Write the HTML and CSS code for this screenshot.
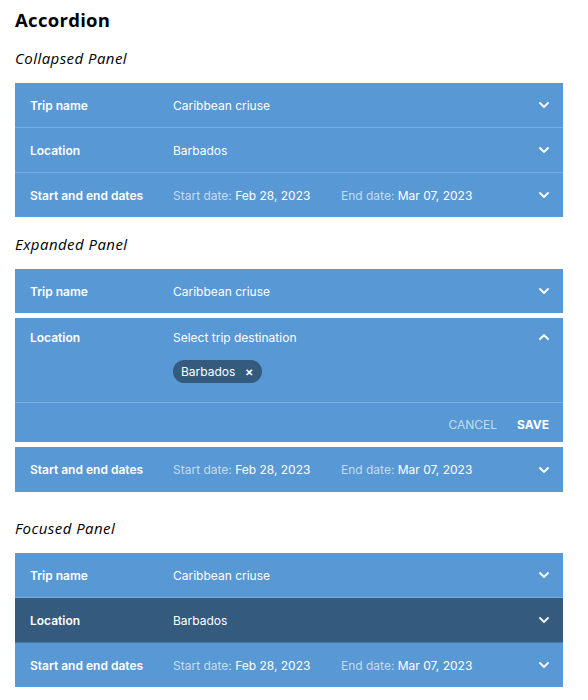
FILE: index.html
```html
<!DOCTYPE html>
<html>
<head>
<meta charset="utf-8">
<link rel="stylesheet" href="styles.css">
</head>
<body>
<h1 class="title">Accordion</h1>

<h2 class="subtitle">Collapsed Panel</h2>
<div class="accordion">
  <div class="row">
    <div class="label">Trip name</div>
    <div class="value">Caribbean criuse</div>
    <svg class="chev" viewBox="0 0 10 6"><path d="M1 1l4 4 4-4"/></svg>
  </div>
  <div class="row">
    <div class="label">Location</div>
    <div class="value">Barbados</div>
    <svg class="chev" viewBox="0 0 10 6"><path d="M1 1l4 4 4-4"/></svg>
  </div>
  <div class="row">
    <div class="label">Start and end dates</div>
    <div class="value dates"><span class="d1"><span class="muted">Start date:</span> Feb 28, 2023</span><span><span class="muted">End date:</span> Mar 07, 2023</span></div>
    <svg class="chev" viewBox="0 0 10 6"><path d="M1 1l4 4 4-4"/></svg>
  </div>
</div>

<h2 class="subtitle">Expanded Panel</h2>
<div class="accordion split">
  <div class="row">
    <div class="label">Trip name</div>
    <div class="value">Caribbean criuse</div>
    <svg class="chev" viewBox="0 0 10 6"><path d="M1 1l4 4 4-4"/></svg>
  </div>
  <div class="panel">
    <div class="row open">
      <div class="label">Location</div>
      <div class="value">Select trip destination</div>
      <svg class="chev" viewBox="0 0 10 6"><path d="M1 5l4-4 4 4"/></svg>
    </div>
    <div class="body">
      <span class="chip">Barbados <span class="x">&#x2715;</span></span>
    </div>
    <div class="actions">
      <span class="cancel">CANCEL</span>
      <span class="save">SAVE</span>
    </div>
  </div>
  <div class="row">
    <div class="label">Start and end dates</div>
    <div class="value dates"><span class="d1"><span class="muted">Start date:</span> Feb 28, 2023</span><span><span class="muted">End date:</span> Mar 07, 2023</span></div>
    <svg class="chev" viewBox="0 0 10 6"><path d="M1 1l4 4 4-4"/></svg>
  </div>
</div>

<h2 class="subtitle focus-title">Focused Panel</h2>
<div class="accordion">
  <div class="row">
    <div class="label">Trip name</div>
    <div class="value">Caribbean criuse</div>
    <svg class="chev" viewBox="0 0 10 6"><path d="M1 1l4 4 4-4"/></svg>
  </div>
  <div class="row focused">
    <div class="label">Location</div>
    <div class="value">Barbados</div>
    <svg class="chev" viewBox="0 0 10 6"><path d="M1 1l4 4 4-4"/></svg>
  </div>
  <div class="row">
    <div class="label">Start and end dates</div>
    <div class="value dates"><span class="d1"><span class="muted">Start date:</span> Feb 28, 2023</span><span><span class="muted">End date:</span> Mar 07, 2023</span></div>
    <svg class="chev" viewBox="0 0 10 6"><path d="M1 1l4 4 4-4"/></svg>
  </div>
</div>
</body>
</html>
```

FILE: styles.css
```css
* { box-sizing: border-box; }
body {
  margin: 0;
  padding: 9px 25px 0 15px;
  background: #fff;
  font-family: Inter, "Noto Sans", sans-serif;
  color: #fff;
}
.title {
  margin: 0;
  font-family: "Open Sans", Lato, sans-serif;
  font-weight: 700;
  font-size: 18.5px;
  line-height: 22px;
  letter-spacing: 0.3px;
  color: #000;
}
.subtitle {
  margin: 16px 0 0;
  font-family: "Open Sans", Lato, sans-serif;
  font-style: italic;
  font-weight: 400;
  font-size: 15px;
  line-height: 22px;
  height: 24px;
  letter-spacing: 0.45px;
  color: #000;
}
.focus-title { margin-top: 25px; }
.accordion {
  margin-top: 12px;
  background: #5898d4;
  display: flex;
  flex-direction: column;
}
.accordion.split {
  background: #fff;
  gap: 5px;
}
.row {
  height: 45px;
  display: flex;
  align-items: center;
  padding: 0 14px 0 15px;
  background: #5898d4;
  font-size: 12px;
}
.accordion > .row:first-child { height: 44px; }
.accordion > .row + .row { border-top: 1px solid #79afe0; }
.row.focused { background: #345a7d; border-top-color: #6f9ed0; }
.row.focused + .row { border-top-color: #4b77a3; }
.label {
  width: 143px;
  font-weight: 600;
  flex: none;
}
.value {
  flex: 1;
  display: flex;
}
.d1 { width: 168px; }
.muted { color: #c4dcf2; }
.chev {
  width: 10px;
  height: 6px;
  fill: none;
  stroke: #fff;
  stroke-width: 1.8;
  stroke-linecap: round;
  stroke-linejoin: round;
}
.panel {
  background: #5898d4;
  display: flex;
  flex-direction: column;
}
.row.open { height: 38px; }
.body {
  padding: 4px 0 19px 158px;
  border-bottom: 1px solid #79afe0;
}
.chip {
  display: inline-flex;
  align-items: center;
  height: 23px;
  padding: 0 9px 0 8px;
  border-radius: 12px;
  background: #345a7d;
  font-size: 12px;
}
.x {
  margin-left: 10px;
  font-size: 10px;
  font-weight: 700;
}
.actions {
  height: 39px;
  display: flex;
  align-items: center;
  justify-content: flex-end;
  gap: 20px;
  padding: 3px 14px 0 0;
  font-size: 12px;
}
.cancel { color: #c4dcf2; }
.save { font-weight: 700; }
```
